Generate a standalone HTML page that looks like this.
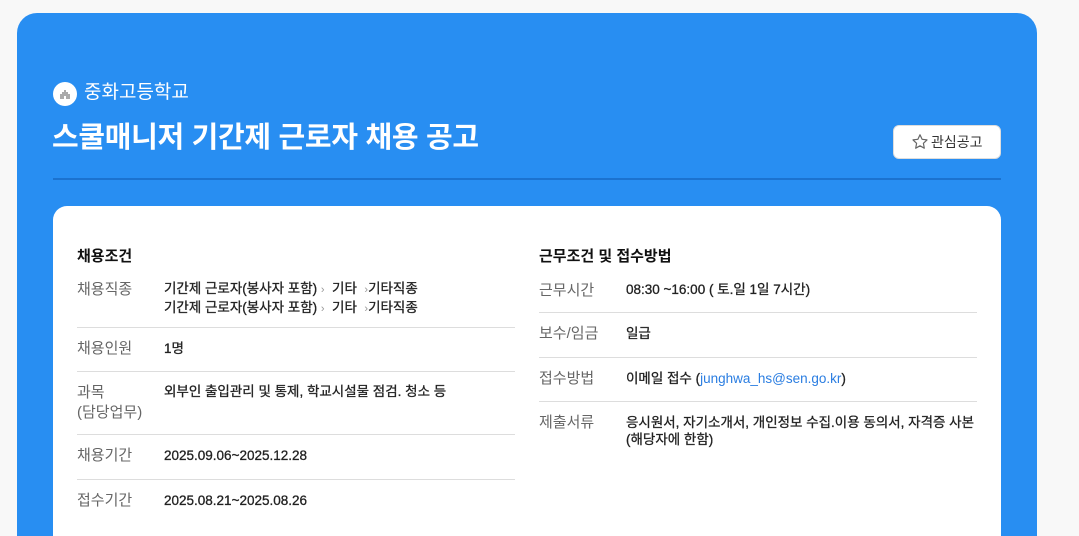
<!DOCTYPE html>
<html style="overflow:hidden;width:1079px;height:536px"><head><meta charset="utf-8"><style>
*{margin:0;padding:0;box-sizing:border-box}
body{width:1079px;height:536px;background:#f8f8f8;font-family:"Liberation Sans","Noto Sans CJK KR",sans-serif;position:relative;overflow:hidden}
.panel{position:absolute;left:17px;top:13px;width:1020px;height:523px;background:#288ef2;border-radius:20px 20px 0 0}
.abs{position:absolute;white-space:nowrap}
.card{position:absolute;left:53px;top:206px;width:948px;height:330px;background:#fff;border-radius:14px 14px 0 0}
.lbl{position:absolute;font-size:15px;color:#666;line-height:20px}
.val{position:absolute;font-size:13.5px;color:#222;line-height:17px;white-space:nowrap;-webkit-text-stroke:0.3px #222}
.hr{position:absolute;height:1px;background:#ddd}
.h{position:absolute;font-size:15px;font-weight:bold;color:#111}
</style></head><body>
<div class="panel"></div>
<div class="abs" style="left:53px;top:82px;width:24px;height:24px;border-radius:50%;background:#fff"></div>
<svg class="abs" style="left:57px;top:86px" width="16" height="16" viewBox="0 0 16 16"><path d="M3 13V8h2V6h2V4h2v2h2v2h2v5z" fill="#aaa"/><rect x="7" y="10" width="2" height="3" fill="#fff"/></svg>
<div class="abs" style="left:84px;top:81px;font-size:19px;color:#fff;line-height:24px">중화고등학교</div>
<div class="abs" style="left:52px;top:119px;font-size:29px;font-weight:bold;color:#fff;line-height:38px;letter-spacing:-0.3px">스쿨매니저 기간제 근로자 채용 공고</div>
<div class="abs" style="left:893px;top:125px;width:108px;height:34px;background:#fff;border-radius:6px;border:1px solid #ddd"></div>
<svg class="abs" style="left:911px;top:133px" width="18" height="18" viewBox="0 0 18 18"><path d="M9 1.8l2.1 4.5 4.9.6-3.6 3.4.9 4.9L9 12.8l-4.3 2.4.9-4.9L2 6.9l4.9-.6z" fill="none" stroke="#666" stroke-width="1.2" stroke-linejoin="round"/></svg>
<div class="abs" style="left:931px;top:132px;font-size:14px;color:#333;line-height:20px">관심공고</div>
<div class="abs" style="left:53px;top:178px;width:948px;height:2px;background:#1b72cf"></div>
<div class="card"></div>
<div class="h" style="left:77px;top:245px">채용조건</div>
<div class="h" style="left:539px;top:245px">근무조건 및 접수방법</div>

<div class="lbl" style="left:77px;top:280px">채용직종</div>
<div class="val" style="left:164px;top:280px">기간제 근로자(봉사자 포함) <span style="color:#999;font-size:11px;-webkit-text-stroke:0">›</span> &nbsp;기타 &nbsp;<span style="color:#999;font-size:11px;-webkit-text-stroke:0">›</span>기타직종<br>기간제 근로자(봉사자 포함) <span style="color:#999;font-size:11px;-webkit-text-stroke:0">›</span> &nbsp;기타 &nbsp;<span style="color:#999;font-size:11px;-webkit-text-stroke:0">›</span>기타직종</div>
<div class="hr" style="left:77px;top:327px;width:438px"></div>
<div class="lbl" style="left:77px;top:339px">채용인원</div>
<div class="val" style="left:164px;top:340px">1명</div>
<div class="hr" style="left:77px;top:371px;width:438px"></div>
<div class="lbl" style="left:77px;top:383px">과목<br>(담당업무)</div>
<div class="val" style="left:164px;top:383px">외부인 출입관리 및 통제, 학교시설물 점검. 청소 등</div>
<div class="hr" style="left:77px;top:434px;width:438px"></div>
<div class="lbl" style="left:77px;top:446px">채용기간</div>
<div class="val" style="left:164px;top:447px">2025.09.06~2025.12.28</div>
<div class="hr" style="left:77px;top:479px;width:438px"></div>
<div class="lbl" style="left:77px;top:491px">접수기간</div>
<div class="val" style="left:164px;top:492px">2025.08.21~2025.08.26</div>

<div class="lbl" style="left:539px;top:281px">근무시간</div>
<div class="val" style="left:626px;top:281px">08:30 ~16:00 ( 토.일 1일 7시간)</div>
<div class="hr" style="left:539px;top:312px;width:438px"></div>
<div class="lbl" style="left:539px;top:324px">보수/임금</div>
<div class="val" style="left:626px;top:325px">일급</div>
<div class="hr" style="left:539px;top:357px;width:438px"></div>
<div class="lbl" style="left:539px;top:369px">접수방법</div>
<div class="val" style="left:626px;top:370px">이메일 접수 (<span style="color:#2a7de1;-webkit-text-stroke:0">junghwa_hs@sen.go.kr</span>)</div>
<div class="hr" style="left:539px;top:401px;width:438px"></div>
<div class="lbl" style="left:539px;top:413px">제출서류</div>
<div class="val" style="left:626px;top:414px">응시원서, 자기소개서, 개인정보 수집.이용 동의서, 자격증 사본<br>(해당자에 한함)</div>
</body></html>
